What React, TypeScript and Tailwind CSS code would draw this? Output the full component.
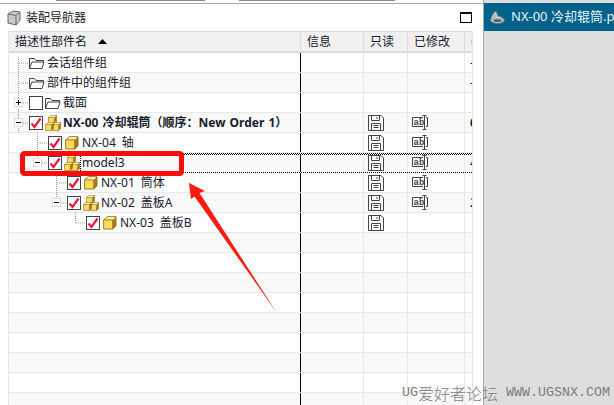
import React from "react";

const CJK = "[font-family:'Noto_Sans','Noto_Sans_CJK_SC',sans-serif]";

function Folder() {
  return (
    <svg width="17" height="14" viewBox="0 0 17 14" className="shrink-0" fill="none" stroke="#444" strokeWidth="1">
      <path d="M1.5 12.5V2.5h5l1.5 2h7.5v1.5" />
      <path d="M1.5 12.5L4 6h12l-2 6.5z" />
    </svg>
  );
}

function Check({ checked = true }: { checked?: boolean }) {
  return (
    <span className="flex h-[14px] w-[14px] shrink-0 items-center justify-center border border-[#444] bg-white">
      {checked && (
        <svg width="12" height="12" viewBox="0 0 12 12" fill="none">
          <path d="M1.5 6.5L4.5 10L10.5 1.5" stroke="#e8193a" strokeWidth="2.2" />
        </svg>
      )}
    </span>
  );
}

function Cube({ x = 0, y = 0, s = 1 }: { x?: number; y?: number; s?: number }) {
  return (
    <g transform={`translate(${x} ${y}) scale(${s})`}>
      <path d="M0.5 3L3.5 0.5H10V3L7.5 3z" fill="#fff5bd" />
      <path d="M0.5 3H7.5V10H0.5z" fill="#fcdc5c" />
      <path d="M7.5 3L10 0.5V7.5L7.5 10z" fill="#a87c14" />
      <path d="M0.5 3L3.5 0.5H10V7.5L7.5 10H0.5zM0.5 3H7.5V10" fill="none" stroke="#8f6c14" strokeWidth="0.7" />
    </g>
  );
}

function Part() {
  return (
    <svg width="14" height="14" viewBox="0 0 14 14" className="shrink-0">
      <Cube s={1.3} />
    </svg>
  );
}

function Assy() {
  return (
    <svg width="16" height="16" viewBox="0 0 16 16" className="shrink-0">
      <Cube x={3} y={0} s={0.85} />
      <Cube x={7.2} y={7} s={0.85} />
      <Cube x={0} y={7} s={0.85} />
    </svg>
  );
}

function Expander({ open = true }: { open?: boolean }) {
  return (
    <span className="relative z-10 flex h-[9px] w-[9px] shrink-0 items-center justify-center border border-[#ddd] bg-white">
      <span className="absolute h-px w-[5px] bg-black" />
      {!open && <span className="absolute h-[5px] w-px bg-black" />}
    </span>
  );
}

function Floppy() {
  return (
    <svg width="16" height="16" viewBox="0 0 16 16" fill="none" stroke="#444" strokeWidth="1">
      <path d="M0.5 0.5H13L15.5 3V15.5H0.5z" />
      <path d="M3.5 0.5V5.5H11.5V0.5M9 2V4" />
      <path d="M3.5 15.5V8.5H12.5V15.5M5.5 10.5H10.5M5.5 12.5H10.5" />
    </svg>
  );
}

function Rename() {
  return (
    <svg width="17" height="15" viewBox="0 0 17 15" fill="none" stroke="#444" strokeWidth="1">
      <path d="M11 2.5H0.5V11.5H11M14 2.5H15.5V11.5H14" />
      <path d="M10.5 0.5H14.5M12.5 0.5V14.5M10.5 14.5H14.5" />
      <text x="1.5" y="10" fontSize="9" fontFamily="'Liberation Mono', monospace" fill="#444" stroke="none" fontWeight="700">ab</text>
    </svg>
  );
}

type Row = {
  level: number;
  type?: "folder" | "part" | "assy";
  label?: string;
  exp?: "open" | "closed";
  check?: boolean | null;
  bold?: boolean;
  ro?: boolean;
  mod?: boolean;
  last?: string;
  focus?: boolean;
};

const rows: Row[] = [
  { level: 0, type: "folder", label: "会话组件组", check: null, last: "-" },
  { level: 0, type: "folder", label: "部件中的组件组", check: null, last: "-" },
  { level: 0, type: "folder", label: "截面", exp: "closed", check: false },
  { level: 0, type: "assy", label: "NX-00 冷却辊筒（顺序：New Order 1）", exp: "open", check: true, bold: true, ro: true, mod: true, last: "6" },
  { level: 1, type: "part", label: "NX-04 轴", check: true, ro: true, mod: true },
  { level: 1, type: "assy", label: "model3", exp: "open", check: true, ro: true, mod: true, last: "4", focus: true },
  { level: 2, type: "part", label: "NX-01 筒体", check: true, ro: true, mod: true },
  { level: 2, type: "assy", label: "NX-02 盖板A", exp: "open", check: true, ro: true, mod: true, last: "2" },
  { level: 3, type: "part", label: "NX-03 盖板B", check: true, ro: true },
  ...Array.from({ length: 9 }, () => ({ level: 0 })),
];

const indent = ["w-[20px]", "w-[39px]", "w-[58px]", "w-[77px]"];

function TreeCell({ r }: { r: Row }) {
  if (!r.type) return null;
  return (
    <div className="flex h-full items-center">
      <div className={`flex shrink-0 items-center justify-end pr-[6px] ${indent[r.level]}`}>
        {r.exp && <Expander open={r.exp === "open"} />}
      </div>
      {r.check === null ? <span className="ml-[-1px]"><Folder /></span> : <Check checked={r.check} />}
      {r.check !== null && (
        <span className="flex w-[19px] shrink-0 justify-center">
          {r.type === "folder" ? <Folder /> : r.type === "part" ? <Part /> : <Assy />}
        </span>
      )}
      <span className={`whitespace-nowrap ${r.check === null ? "ml-[2px]" : "ml-px"} ${r.bold ? "font-bold [word-spacing:1px]" : "[word-spacing:3px]"}`}>{r.label}</span>
    </div>
  );
}

export default function App() {
  return (
    <div className={`flex h-[405px] w-[614px] overflow-hidden bg-white text-[12px] text-[#16202c] ${CJK}`}>
      <div className="flex w-[483px] shrink-0 flex-col">
        <div className="flex h-[4px] shrink-0 flex-col">
          <div className="flex h-px">
            <div className="ml-[56px] w-[149px] bg-[#8a8a8a]" />
            <div className="ml-[34px] w-[156px] bg-[#8a8a8a]" />
          </div>
          <div className="flex-1" />
          <div className="h-px bg-[#aaa]" />
        </div>
        <div className="flex h-[27px] shrink-0 items-center pl-[7px] pr-[11px]">
          <svg width="14" height="16" viewBox="0 0 14 16" fill="none" stroke="#666" strokeWidth="1">
            <path d="M1 4L6 1L13 2V10L9 15L1 13z" fill="#c9c9c9" />
            <path d="M1 4L9 5.5V15M9 5.5L13 2" />
          </svg>
          <span className="ml-[5px] text-[#222]">装配导航器</span>
          <span className="ml-auto h-[11px] w-[12px] border border-t-2 border-black" />
        </div>
        <div className="ml-[8px] mr-[10px] min-h-0 flex-1 overflow-hidden border-l border-r border-[#e4e4e4]">
          <div className="flex h-[22px] border-b-2 border-t border-[#dcdcdc] bg-[#f0f0f0] leading-[19px]">
            <div className="flex w-[292px] shrink-0 items-center gap-[11px] border-r border-[#dcdcdc] pl-[6px]">
              <span>描述性部件名</span>
              <svg width="9" height="5" viewBox="0 0 9 5"><path d="M0 5L4.5 0L9 5z" fill="#000" /></svg>
            </div>
            <div className="w-[63px] shrink-0 border-r border-[#dcdcdc] pl-[6px]">信息</div>
            <div className="w-[44px] shrink-0 border-r border-[#dcdcdc] pl-[6px]">只读</div>
            <div className="w-[57px] shrink-0 border-r border-[#dcdcdc] pl-[6px]">已修改</div>
            <div className="min-w-0 flex-1 overflow-hidden whitespace-nowrap pl-[6px]">装配</div>
          </div>
          {rows.map((r, i) => (
            <div key={i} className={`relative flex h-[20px] border-b border-[#e8e8e8] ${i % 2 ? "bg-[#f9f9f9]" : "bg-white"}`}>
              <div className="w-[292px] shrink-0 border-r border-black">
                <TreeCell r={r} />
              </div>
              <div className="w-[63px] shrink-0 border-r border-[#e8e8e8]" />
              <div className="flex w-[44px] shrink-0 items-center border-r border-[#e8e8e8] pl-[4px]">{r.ro && <Floppy />}</div>
              <div className="flex w-[57px] shrink-0 items-center border-r border-[#e8e8e8] pl-[4px]">{r.mod && <Rename />}</div>
              <div className={`min-w-0 flex-1 overflow-hidden pl-[5px] leading-[19px] ${r.bold ? "font-bold" : ""}`}>{r.last}</div>
              {r.focus && (
                <>
                  <div className="absolute left-[71px] right-0 top-0 h-[2px] bg-[repeating-conic-gradient(#000_0_25%,#fff_0_50%)] bg-[length:2px_2px]" />
                  <div className="absolute bottom-[-2px] left-[71px] right-0 h-[2px] bg-[repeating-conic-gradient(#000_0_25%,#fff_0_50%)] bg-[length:2px_2px]" />
                  <div className="absolute bottom-0 left-[71px] top-0 w-px bg-[repeating-conic-gradient(#000_0_25%,#fff_0_50%)] bg-[length:2px_2px]" />
                </>
              )}
            </div>
          ))}
        </div>
      </div>
      <div className="flex min-w-0 flex-1 flex-col border-l border-[#a8a8a8] bg-[#dedede]">
        <div className="mt-[3px] flex h-[28px] items-center gap-[6px] overflow-hidden whitespace-nowrap bg-[#00618a] pl-[6px] text-[13px] text-[#e9f2f6]">
          <svg width="15" height="15" viewBox="0 0 15 15" className="shrink-0">
            <path d="M0.5 11C1 7 3 2.5 6 1L8 6C11 6.2 14 8.5 14.5 11C11.5 14 4 14.5 0.5 11z" fill="#b9c1c6" stroke="#6d7a83" strokeWidth="0.7" />
            <ellipse cx="7.5" cy="10.5" rx="4" ry="1.6" fill="#56636c" />
          </svg>
          <span>NX-00 冷却辊筒.prt</span>
        </div>
      </div>

      <svg width="614" height="405" viewBox="0 0 614 405" className="pointer-events-none absolute left-0 top-0" fill="none">
        <g stroke="#9a9a9a" strokeWidth="1" strokeDasharray="1 1">
          <path d="M18.5 57V98M19 63H28M19 83H28M18.5 109V118M23 103H29M23 123H29M18.5 128V132" />
          <path d="M37.5 132V158M38 143H48M42 163H48" />
          <path d="M56.5 172V199M57 183H67M61 203H67M75.5 212V223M76 223H86" />
        </g>
        <rect x="22.5" y="153.5" width="159" height="20" rx="2" stroke="#ff0d0d" strokeWidth="5" />
        <path d="M189 183L205 191L199.5 193L277 313L194.5 196.5L191 199z" fill="#ff1a12" />
      </svg>

      <div className="pointer-events-none absolute left-[402px] top-[383px] flex h-[19px] items-center whitespace-nowrap font-['Liberation_Mono','Noto_Sans_CJK_SC',monospace] text-[13.33px] text-[#7d7d7d]">
        <span>UG</span>
        <span className="font-light [font-family:'Noto_Sans_CJK_SC',sans-serif] text-[16px]">爱好者论坛</span>
        <span>&nbsp;WWW.UGSNX.COM</span>
      </div>
    </div>
  );
}
